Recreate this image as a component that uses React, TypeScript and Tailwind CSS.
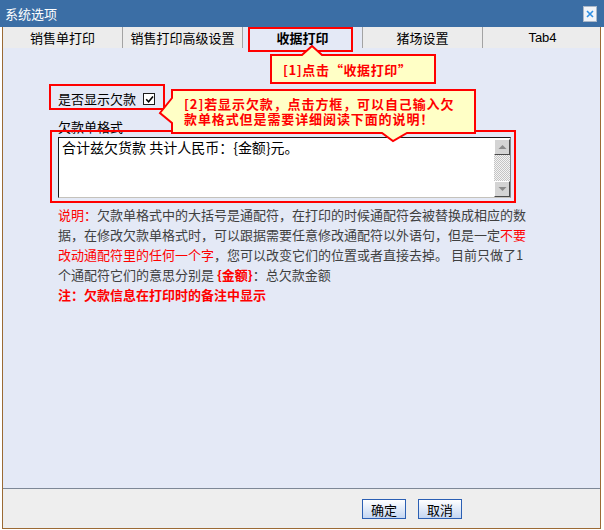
const tabs = ["销售单打印", "销售打印高级设置", "收据打印", "猪场设置", "Tab4"];

const ScrollButton = ({ up }: { up: boolean }) => (
  <div className="w-[16px] h-[16px] bg-[#d4d4d4] border-t border-l border-t-white border-l-white border-b border-r border-b-[#4a4a4a] border-r-[#4a4a4a] flex items-center justify-center">
    <svg width="9" height="6" viewBox="0 0 9 6">
      {up ? (
        <polygon points="0.5,5 4.5,1 8.5,5" fill="#8a8a8a" />
      ) : (
        <polygon points="0.5,1 4.5,5 8.5,1" fill="#8a8a8a" />
      )}
    </svg>
  </div>
);

const App = () => {
  return (
    <div className="relative w-[604px] h-[530px] bg-white overflow-hidden font-['Noto_Sans_CJK_SC',sans-serif]">
      {/* title bar */}
      <div className="h-[27px] bg-[#3b6ea5] flex items-center justify-between pl-[5px] pr-[7px]">
        <span className="text-white text-[13px] leading-none">系统选项</span>
        <div className="w-[14px] h-[16px] bg-[#f1f4f9] border border-[#aab7c8] flex items-center justify-center">
          <svg width="8" height="8" viewBox="0 0 8 8">
            <path d="M1 1 L7 7 M7 1 L1 7" stroke="#2f8fe3" strokeWidth="1.6" />
          </svg>
        </div>
      </div>

      <div className="ml-[2px] w-[599px] h-[502px] border-x border-b border-[#9b6a34] flex flex-col">
        {/* tabs */}
        <div className="h-[21px] bg-[#ececec] flex overflow-hidden">
          {tabs.map((t, i) => (
            <div
              key={t}
              className={
                i === 2
                  ? "w-[120px] shrink-0 border-r border-[#a3a3a3] flex items-center justify-center text-[13px] text-black bg-[#e4e9f6] font-bold"
                  : i === 4
                  ? "w-[120px] shrink-0 border-r border-[#a3a3a3] flex items-center justify-center text-[13px] text-black font-['Liberation_Sans',sans-serif]"
                  : "w-[120px] shrink-0 border-r border-[#a3a3a3] flex items-center justify-center text-[13px] text-black"
              }
            >
              {t}
            </div>
          ))}
        </div>

        {/* content */}
        <div className="h-[441px] bg-[#e4e9f6] border-b border-[#7d8796] pl-[55px] pt-[43px] text-[13px]">
          <div className="flex items-center h-[16px] leading-[16px] text-black">
            <span>是否显示欠款</span>
            <div className="ml-[7px] w-[12px] h-[12px] bg-white border border-[#1c1c1c] flex items-center justify-center">
              <svg width="9" height="9" viewBox="0 0 9 9">
                <path d="M1.2 4.3 L3.6 6.8 L8 1.6" stroke="#000" strokeWidth="1.6" fill="none" />
              </svg>
            </div>
          </div>

          <div className="mt-[12px] leading-[16px] text-black">欠款单格式</div>

          <div className="mt-[2px] w-[453px] h-[61px] bg-white border-t border-l border-t-[#1a1a1a] border-l-[#1a1a1a] border-b border-r border-b-[#c5c2bb] border-r-[#8a8a8a] flex">
            <div className="flex-1 pl-[3px] pt-[1px] text-[14px] leading-[16px] text-black">
              合计兹欠货款 共计人民币：{"{"}金额{"}"}元。
            </div>
            <div className="w-[16px] mt-[1px] flex flex-col">
              <ScrollButton up />
              <div className="flex-1 bg-[repeating-conic-gradient(#c4c4c4_0_25%,#f4f4f4_0_50%)] bg-[length:2px_2px]" />
              <ScrollButton up={false} />
            </div>
          </div>

          <div className="mt-[7px] leading-[20px] text-[#404040] whitespace-nowrap">
            <div>
              <span className="text-[#ff0000]">说明：</span>
              欠款单格式中的大括号是通配符，在打印的时候通配符会被替换成相应的数
            </div>
            <div>
              据，在修改欠款单格式时，可以跟据需要任意修改通配符以外语句，但是一定
              <span className="text-[#ff0000]">不要</span>
            </div>
            <div>
              <span className="text-[#ff0000]">改动通配符里的任何一个字</span>
              ，您可以改变它们的位置或者直接去掉。 目前只做了1
            </div>
            <div>
              个通配符它们的意思分别是 <span className="text-[#ff0000] font-bold">{"{金额}"}</span>：总欠款金额
            </div>
            <div className="text-[#ff0000] font-bold">注：欠款信息在打印时的备注中显示</div>
          </div>
        </div>

        {/* footer */}
        <div className="h-[39px] bg-[#eeeeee] flex pl-[359px] pt-[10px] gap-[12px]">
          <button className="w-[44px] h-[20px] border border-[#2b5fb3] bg-gradient-to-b from-white to-[#c4d6f2] text-[13px] leading-none text-black">
            确定
          </button>
          <button className="w-[44px] h-[20px] border border-[#2b5fb3] bg-gradient-to-b from-white to-[#c4d6f2] text-[13px] leading-none text-black">
            取消
          </button>
        </div>
      </div>

      {/* annotation boxes */}
      <div className="absolute left-[248px] top-[27px] w-[105px] h-[25px] border-2 border-[#ff0000]" />
      <div className="absolute left-[49px] top-[84px] w-[116px] h-[26px] border-2 border-[#ff0000]" />
      <div className="absolute left-[50px] top-[130px] w-[466px] h-[73px] border-2 border-[#ff0000]" />

      {/* callout 1 */}
      <svg className="absolute left-[270px] top-[45px]" width="167" height="40" viewBox="0 0 167 40">
        <path d="M1 10 L32 10 L42 1 L52 10 L165 10 L165 38 L1 38 Z" fill="#ffffc6" stroke="#ff0000" strokeWidth="2" />
      </svg>
      <div className="absolute left-[283px] top-[62px] text-[13px] leading-[16px] font-bold text-[#ff0000] tracking-[0.6px] whitespace-nowrap">
        [1]点击<span className="inline-block w-[14px] text-right">“</span>收据打印<span className="inline-block w-[14px] text-left">”</span>
      </div>

      {/* callout 2 */}
      <svg className="absolute left-[158px] top-[88px]" width="320" height="55" viewBox="0 0 320 55">
        <path
          d="M14 2 L317 2 L317 45 L249 45 L235 53 L224 45 L14 45 L14 35 L2 25 L14 10 Z"
          fill="#ffffc6"
          stroke="#ff0000"
          strokeWidth="2"
        />
      </svg>
      <div className="absolute left-[184px] top-[96px] text-[13px] leading-[15px] font-bold text-[#ff0000] tracking-[0.9px] whitespace-nowrap">
        <div>[2]若显示欠款，点击方框，可以自己输入欠</div>
        <div>款单格式但是需要详细阅读下面的说明！</div>
      </div>
    </div>
  );
};

export default App;
